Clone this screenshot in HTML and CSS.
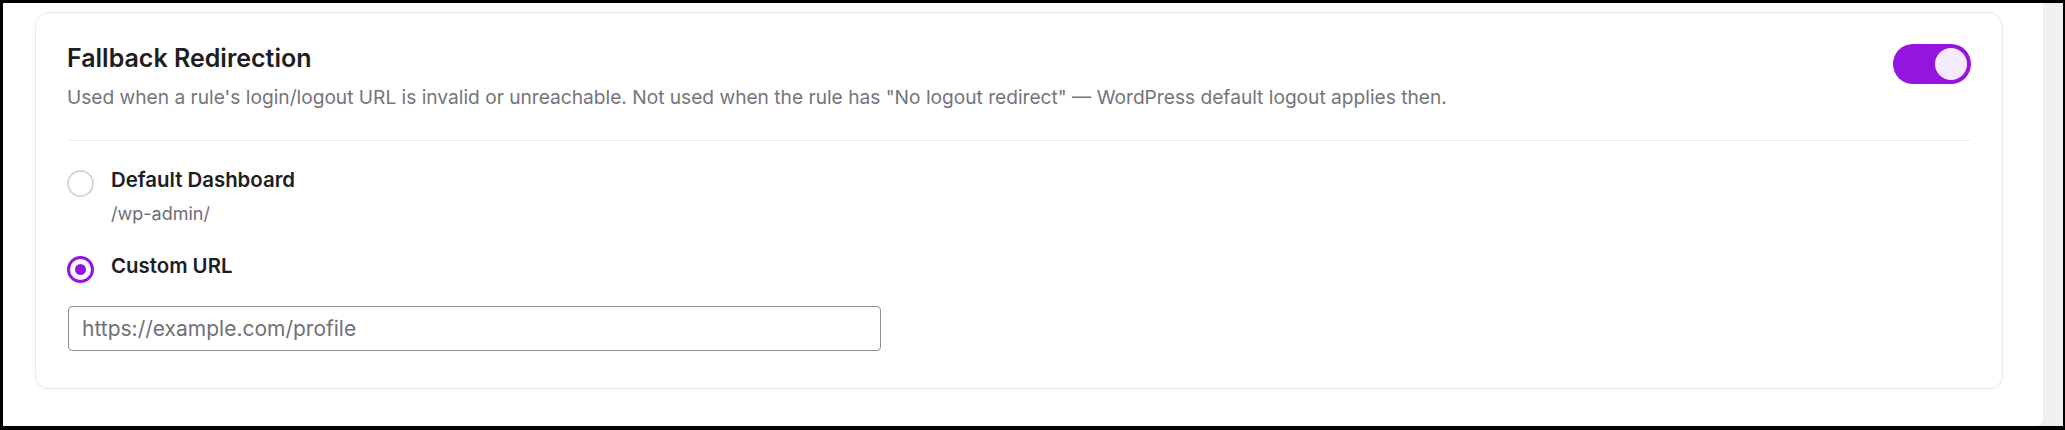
FILE: index.html
```html
<!DOCTYPE html>
<html lang="en">
<head>
<meta charset="utf-8">
<title>Fallback Redirection</title>
<link rel="stylesheet" href="styles.css">
</head>
<body>
<div class="frame">
  <main class="page">
    <section class="card">
      <header class="card-head">
        <div class="head-text">
          <h2 class="title">Fallback Redirection</h2>
          <p class="desc">Used when a rule's login/logout URL is invalid or unreachable. Not used when the rule has "No logout redirect" — WordPress default logout applies then.</p>
        </div>
        <button class="toggle is-on" type="button" aria-pressed="true" aria-label="Enable fallback redirection"><span class="knob"></span></button>
      </header>
      <div class="options">
        <label class="option">
          <span class="radio"></span>
          <span class="option-text">
            <span class="option-label">Default Dashboard</span>
            <span class="option-sub">/wp-admin/</span>
          </span>
        </label>
        <label class="option">
          <span class="radio is-checked"></span>
          <span class="option-text">
            <span class="option-label">Custom URL</span>
          </span>
        </label>
        <input class="url-input" type="text" placeholder="https://example.com/profile">
      </div>
    </section>
  </main>
  <div class="scrollbar"></div>
</div>
</body>
</html>
```
FILE: styles.css
```css
* { box-sizing: border-box; }
html, body { margin: 0; padding: 0; }
body {
  background: #000;
  width: 2065px;
  height: 430px;
  overflow: hidden;
  font-family: Inter, "Noto Sans", sans-serif;
}
.frame {
  display: flex;
  height: 430px;
  padding: 3px 2px 4px 3px;
}
.page {
  flex: 1;
  position: relative;
  z-index: 1;
  background: #fff;
  padding: 9px 40px 0 32px;
  border-bottom-right-radius: 8px;
}
.scrollbar {
  flex: none;
  width: 28px;
  margin-left: -8px;
  background: #f0f0f0;
}
.card {
  background: #fff;
  border: 1px solid #e9e9ee;
  border-radius: 14px;
  box-shadow: 0 1px 3px rgba(0, 0, 0, 0.04);
  padding: 0 31px 37px 31px;
}
.card-head {
  display: flex;
  align-items: flex-start;
  justify-content: space-between;
  padding: 30px 0 31px;
  border-bottom: 1px solid #f0f0f3;
}
.title {
  margin: 0;
  font-size: 25px;
  line-height: 30px;
  font-weight: 600;
  color: #1d1d22;
}
.desc {
  margin: 12px 0 0;
  font-size: 19.15px;
  line-height: 24px;
  color: #74747c;
}
.toggle {
  flex: none;
  width: 78px;
  height: 40px;
  margin-top: 1px;
  border: 0;
  border-radius: 20px;
  background: #9614e0;
  padding: 0 4px;
  display: flex;
  align-items: center;
  justify-content: flex-end;
}
.knob {
  width: 32px;
  height: 32px;
  border-radius: 50%;
  background: #f6ebfe;
}
.options {
  padding-top: 27px;
  display: flex;
  flex-direction: column;
}
.option {
  display: flex;
  align-items: flex-start;
  gap: 17px;
}
.option + .option { margin-top: 30px; }
.radio {
  flex: none;
  width: 27px;
  height: 27px;
  margin-top: 2px;
  border-radius: 50%;
  border: 2px solid #cfd6e0;
  display: flex;
  align-items: center;
  justify-content: center;
}
.radio.is-checked {
  border: 3px solid #9614e0;
}
.radio.is-checked::after {
  content: "";
  width: 11px;
  height: 11px;
  border-radius: 50%;
  background: #9614e0;
}
.option-text {
  display: flex;
  flex-direction: column;
}
.option-label {
  font-size: 20.4px;
  line-height: 24px;
  font-weight: 600;
  color: #1d1d22;
}
.option-sub {
  margin-top: 12px;
  font-size: 18px;
  line-height: 20px;
  color: #6e6e76;
}
.url-input {
  margin-top: 23px;
  margin-left: 1px;
  width: 813px;
  height: 45px;
  border: 1px solid #8c8f94;
  border-radius: 4px;
  padding: 0 13px;
  font-family: inherit;
  font-size: 21px;
  color: #1d1d22;
  background: #fff;
}
.url-input::placeholder { color: #707078; }
```
